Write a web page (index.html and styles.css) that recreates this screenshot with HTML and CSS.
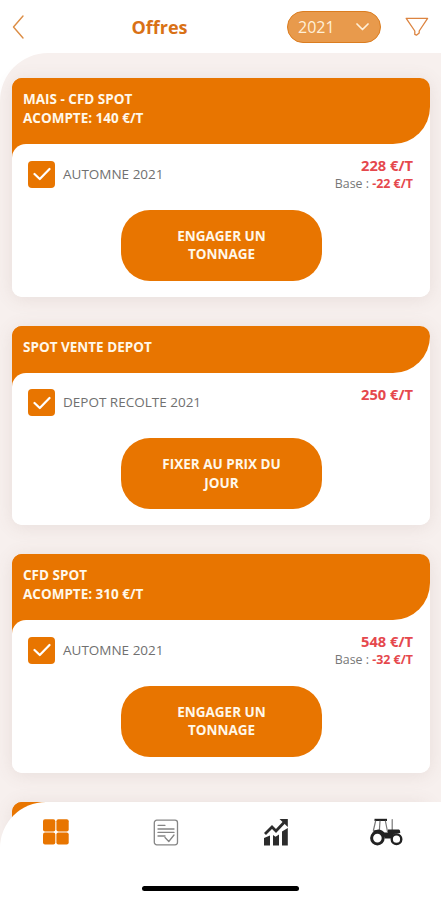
FILE: index.html
```html
<!DOCTYPE html>
<html lang="fr">
  <head>
    <meta charset="UTF-8" />
    <meta name="viewport" content="width=device-width, initial-scale=1.0" />
    <title>Offres</title>
    <link rel="stylesheet" href="styles.css">
  </head>
  <body>
    <div class="app">
      <header class="topbar">
        <svg class="back" viewBox="0 0 12 24"><path d="M11 1 L1.5 12 L11 23" /></svg>
        <h1>Offres</h1>
        <div class="year">
          <span>2021</span>
          <svg viewBox="0 0 13 8"><path d="M1 1 L6.5 6.5 L12 1" /></svg>
        </div>
        <svg class="filter" viewBox="0 0 24 20"><path d="M1.2 1.4 H22.6 L14.2 14 V16 L11.4 18.2 L9.8 17.4 V14 Z" /></svg>
      </header>

      <main class="offers">
        <div class="card">
          <div class="card-header">MAIS - CFD SPOT<br>ACOMPTE: 140 €/T</div>
          <div class="card-body">
            <div class="row">
              <div class="checkbox"><svg viewBox="0 0 18 14"><path d="M1.5 7 L6.8 12 L16.5 2" /></svg></div>
              <span class="label">AUTOMNE 2021</span>
              <div class="price">
                <strong>228 €/T</strong>
                <div class="base">Base : <b>-22 €/T</b></div>
              </div>
            </div>
            <button class="action">ENGAGER UN<br>TONNAGE</button>
          </div>
        </div>

        <div class="card">
          <div class="card-header">SPOT VENTE DEPOT</div>
          <div class="card-body">
            <div class="row">
              <div class="checkbox"><svg viewBox="0 0 18 14"><path d="M1.5 7 L6.8 12 L16.5 2" /></svg></div>
              <span class="label">DEPOT RECOLTE 2021</span>
              <div class="price">
                <strong>250 €/T</strong>
              </div>
            </div>
            <button class="action">FIXER AU PRIX DU<br>JOUR</button>
          </div>
        </div>

        <div class="card">
          <div class="card-header">CFD SPOT<br>ACOMPTE: 310 €/T</div>
          <div class="card-body">
            <div class="row">
              <div class="checkbox"><svg viewBox="0 0 18 14"><path d="M1.5 7 L6.8 12 L16.5 2" /></svg></div>
              <span class="label">AUTOMNE 2021</span>
              <div class="price">
                <strong>548 €/T</strong>
                <div class="base">Base : <b>-32 €/T</b></div>
              </div>
            </div>
            <button class="action">ENGAGER UN<br>TONNAGE</button>
          </div>
        </div>

        <div class="card">
          <div class="card-header"></div>
          <div class="card-body"></div>
        </div>
      </main>

      <nav class="tabbar">
        <div class="tabs">
          <div class="tab">
            <svg class="icon-grid" viewBox="0 0 26 26">
              <rect x="0" y="0.3" width="12.3" height="12.2" rx="2" />
              <rect x="13.4" y="0.3" width="12.3" height="12.2" rx="2" />
              <rect x="0" y="13.4" width="12.3" height="12.2" rx="2" />
              <rect x="13.4" y="13.4" width="12.3" height="12.2" rx="2" />
            </svg>
          </div>
          <div class="tab">
            <svg class="icon-doc" viewBox="0 0 26 27">
              <rect x="1.3" y="1.2" width="23.2" height="24.6" rx="2.5" />
              <path d="M5 6.3 H12 M5 10 H21 M5 13.4 H21 M5 17 H12" />
              <path d="M12 18.5 L15.8 22.5 L21 16" />
            </svg>
          </div>
          <div class="tab">
            <svg class="icon-chart" viewBox="0 0 26 28">
              <path d="M1 20 L7 17.5 V27.5 H1 Z M10 17 L12.5 18.8 L16 16.5 V27.5 H10 Z M19 13.5 L24.8 10 V27.5 H19 Z" />
              <path class="line" d="M2 16 L9 9 L13 13 L21 4.5" />
              <path d="M16.5 1 H24.8 V9 Z" />
            </svg>
          </div>
          <div class="tab">
            <svg class="icon-tractor" viewBox="0 0 34 28">
              <path d="M5.5 0.8 H18 V3 H5.5 Z" />
              <path class="frame" d="M6.6 3 L4.4 12.5 M11 3 L10.4 12 M16.4 3 L18.6 14 M4.4 12.6 H10.4 M23.2 1.5 V12" />
              <path d="M3 14.5 Q8 9.5 13 12.5 L15.5 14.5 H19 V11.5 H30 Q31.3 11.8 31.3 15 L25 16 L21.8 20.5 H15.8 Q14.5 14.5 8.4 14.2 Z" />
              <circle class="wheel-big" cx="8.4" cy="20.1" r="5.8" />
              <circle class="wheel-small" cx="27.5" cy="21.2" r="4.8" />
            </svg>
          </div>
        </div>
        <div class="home-indicator"></div>
      </nav>
    </div>
  </body>
</html>
```
FILE: styles.css
```css
* {
  box-sizing: border-box;
}
body {
  margin: 0;
  font-family: "Open Sans", sans-serif;
  background-color: #fff;
}
svg {
  display: block;
  fill: none;
  stroke-linecap: round;
  stroke-linejoin: round;
}
.app {
  display: flex;
  flex-direction: column;
  height: 900px;
  overflow: hidden;
}
.topbar {
  display: flex;
  flex: none;
  align-items: center;
  height: 53px;
  padding: 1px 12px 0;
}
.back {
  width: 12px;
  height: 24px;
  stroke: #dc8d45;
  stroke-width: 1.4;
}
h1 {
  width: 56px;
  margin: 0 0 0 107.5px;
  font-size: 18px;
  line-height: 24px;
  font-weight: 700;
  color: #d97116;
  white-space: nowrap;
}
.year {
  display: flex;
  align-items: center;
  justify-content: space-between;
  width: 94px;
  height: 32px;
  margin-left: 99.5px;
  padding: 0 11px 0 10px;
  border: 1px solid #db7d20;
  border-radius: 16px;
  background-color: #e89a4c;
  color: #fff0d8;
  font-size: 16px;
}
.year svg {
  width: 13px;
  height: 8px;
  stroke: #fff0d8;
  stroke-width: 1.7;
}
.filter {
  width: 24px;
  height: 20px;
  margin-left: 24px;
  stroke: #dc8440;
  stroke-width: 1.3;
}
.offers {
  display: flex;
  flex: 1;
  flex-direction: column;
  gap: 29px;
  min-height: 0;
  margin-bottom: -53px;
  padding: 25px 11px 0 12px;
  border-radius: 48px 0 0 0;
  background-color: #f7f0ee;
}
.card {
  flex: none;
  border-radius: 10px;
  background: linear-gradient(to right, #e87500 50%, #fff 50%) top / 100% 90px no-repeat #fff;
  box-shadow: 0 2px 18px rgba(120, 90, 80, 0.12);
  overflow: hidden;
}
.card-header {
  min-height: 47px;
  padding: 12px 11px 16px;
  border-radius: 0 0 37px 0;
  background-color: #e87500;
  color: #fff8ea;
  font-size: 13.5px;
  line-height: 19px;
  font-weight: 700;
}
.card-body {
  height: 152.5px;
  padding: 16.5px 17px 0 16px;
  border-radius: 14px 0 0 0;
  background-color: #fff;
}
.row {
  display: flex;
  height: 49px;
}
.checkbox {
  display: flex;
  align-items: center;
  justify-content: center;
  width: 27px;
  height: 27px;
  border-radius: 4px;
  background-color: #e87500;
}
.checkbox svg {
  width: 18px;
  height: 14px;
  stroke: #fff;
  stroke-width: 2.2;
}
.label {
  margin-left: 8px;
  font-size: 13.5px;
  line-height: 27px;
  color: #707070;
}
.price {
  margin-left: auto;
  margin-top: -5.5px;
  text-align: right;
  color: #e5484d;
}
.price strong {
  display: block;
  font-size: 14.7px;
  line-height: 20px;
}
.base {
  font-size: 12.4px;
  line-height: 18px;
  color: #777;
}
.base b {
  color: #e5484d;
}
.action {
  display: block;
  width: 201px;
  height: 71px;
  margin: 0 auto 0 93px;
  padding: 0;
  border: none;
  border-radius: 29px;
  background-color: #e87500;
  color: #fff8ea;
  font-family: inherit;
  font-size: 13.5px;
  line-height: 18.5px;
  font-weight: 700;
}
.tabbar {
  position: relative;
  flex: none;
  height: 98px;
  border-radius: 46px 0 0 0;
  background-color: #fff;
}
.tabs {
  display: grid;
  grid-template-columns: repeat(4, 1fr);
  height: 60px;
  padding-left: 1px;
}
.tab {
  display: flex;
  align-items: center;
  justify-content: center;
}
.icon-grid {
  width: 26px;
  height: 26px;
  fill: #e87500;
}
.icon-doc {
  width: 26px;
  height: 27px;
  stroke: #858585;
  stroke-width: 1.3;
}
.icon-chart {
  width: 26px;
  height: 28px;
  fill: #2c2c2c;
}
.icon-chart .line {
  fill: none;
  stroke: #2c2c2c;
  stroke-width: 2.8;
  stroke-linejoin: miter;
  stroke-linecap: butt;
}
.icon-tractor {
  width: 34px;
  height: 28px;
  fill: #222;
}
.icon-tractor .frame {
  fill: none;
  stroke: #777;
  stroke-width: 1.2;
}
.icon-tractor circle {
  fill: #fff;
  stroke: #222;
}
.icon-tractor .wheel-big {
  stroke-width: 3;
}
.icon-tractor .wheel-small {
  stroke-width: 2.4;
}
.home-indicator {
  width: 157px;
  height: 5px;
  margin: 24px auto 0;
  border-radius: 3px;
  background-color: #000;
}
```
